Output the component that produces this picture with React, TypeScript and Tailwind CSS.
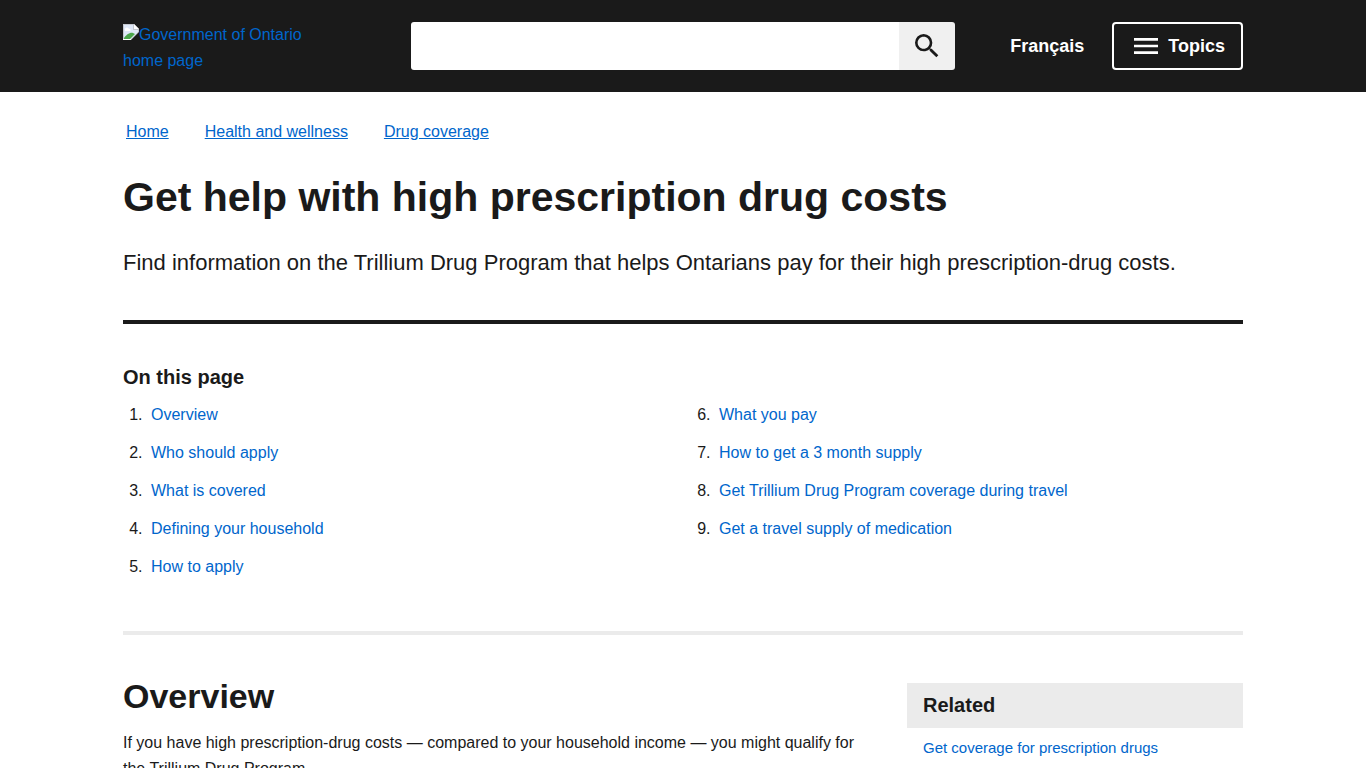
import { MdSearch } from "react-icons/md";

const breadcrumbs = ["Home", "Health and wellness", "Drug coverage"];

const sections = [
  "Overview",
  "Who should apply",
  "What is covered",
  "Defining your household",
  "How to apply",
  "What you pay",
  "How to get a 3 month supply",
  "Get Trillium Drug Program coverage during travel",
  "Get a travel supply of medication",
];

function MissingImageIcon() {
  return (
    <svg viewBox="0 0 16 16" className="inline-block size-4 align-baseline" aria-hidden="true">
      <path d="M0 0h11l5 5v3L8 16H0z" fill="#c4c8cf" />
      <path d="M1 1h9v5h5v2l-7 7H1z" fill="#dfe8f8" />
      <path d="M11 0v5h5z" fill="#fff" />
      <path d="M2 6a2 2 0 0 1 4-1 1 1 0 0 1 1 2H2z" fill="#fff" />
      <path d="M1 15v-1c2-3 6-6 9-5l2 1-5 5z" fill="#4ca64c" />
      <path d="M0 15h8v1H0z" fill="#fff" />
    </svg>
  );
}

function Header() {
  return (
    <header className="bg-[#1a1a1a] py-[22px]">
      <div className="mx-auto flex h-12 max-w-[1152px] items-center px-4">
        <div className="w-[288px]">
          <a href="#" className="block h-12 w-[180px] overflow-hidden leading-[26px] text-[#0066cc]">
            <MissingImageIcon />
            Government of Ontario home page
          </a>
        </div>
        <form className="flex h-12 flex-1 overflow-hidden rounded-[3px]">
          <input
            type="text"
            aria-label="Search"
            className="min-w-0 flex-1 bg-white px-4 text-[#1a1a1a] outline-none"
          />
          <button
            type="button"
            aria-label="Submit search"
            className="flex w-14 items-center justify-center bg-[#f0f0f0] text-[#1a1a1a]"
          >
            <MdSearch className="size-8" />
          </button>
        </form>
        <nav className="flex w-[288px] items-center justify-end gap-7 text-lg font-bold text-white">
          <a href="#">Français</a>
          <button
            type="button"
            className="flex h-12 items-center gap-[10px] rounded-[4px] border-2 border-white pr-4 pl-5"
          >
            <svg viewBox="0 0 24 16" className="h-4 w-6" fill="currentColor" aria-hidden="true">
              <path d="M0 0h24v2.67H0zM0 6.67h24v2.66H0zM0 13.33h24V16H0z" />
            </svg>
            Topics
          </button>
        </nav>
      </div>
    </header>
  );
}

export default function App() {
  return (
    <div className="min-h-screen bg-white font-['Liberation_Sans',Arial,sans-serif] text-base text-[#1a1a1a]">
      <Header />
      <main className="mx-auto max-w-[1152px] px-4">
        <nav aria-label="Breadcrumb" className="flex gap-9 px-[3px] pt-7 leading-6">
          {breadcrumbs.map((crumb) => (
            <a key={crumb} href="#" className="text-[#0066cc] underline">
              {crumb}
            </a>
          ))}
        </nav>

        <h1 className="mt-[27px] text-[41px] leading-[52px] font-bold">
          Get help with high prescription drug costs
        </h1>
        <p className="mt-6 text-[22px] leading-8">
          Find information on the Trillium Drug Program that helps Ontarians pay for their high
          prescription-drug costs.
        </p>
        <hr className="mt-[41px] border-t-4 border-[#1a1a1a]" />

        <section className="mt-10">
          <h2 className="text-xl leading-[26px] font-bold">On this page</h2>
          <ol className="mt-3 list-decimal columns-2 gap-4">
            {sections.map((section) => (
              <li key={section} className="ml-6 break-inside-avoid pb-3 pl-1 leading-[26px]">
                <a href="#" className="text-[#0066cc]">
                  {section}
                </a>
              </li>
            ))}
          </ol>
        </section>
        <hr className="mt-[39px] border-t-4 border-[#ebebeb]" />

        <div className="mt-12 flex gap-8">
          <section className="flex-1">
            <h2 className="text-[34px] leading-[26px] font-bold">Overview</h2>
            <p className="mt-[21px] leading-[26px]">
              If you have high prescription-drug costs — compared to your household income — you
              might qualify for the Trillium Drug Program.
            </p>
          </section>
          <aside className="w-[336px]">
            <h2 className="bg-[#ebebeb] px-4 py-2 text-xl leading-[29px] font-bold">Related</h2>
            <a href="#" className="block px-4 py-2 text-[15px] leading-6 text-[#0066cc]">
              Get coverage for prescription drugs
            </a>
          </aside>
        </div>
      </main>
    </div>
  );
}
